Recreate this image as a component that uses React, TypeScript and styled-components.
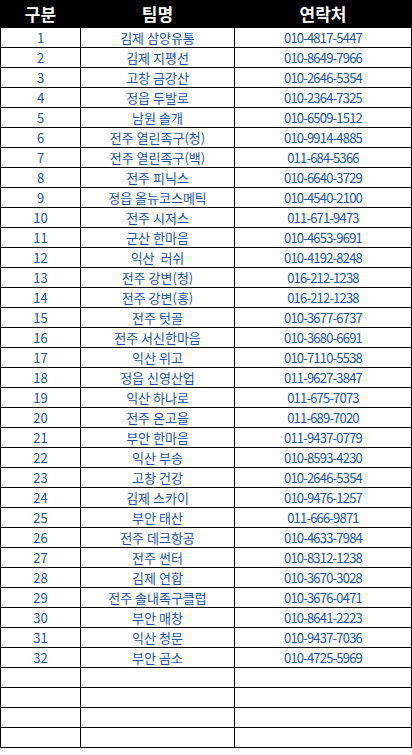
import React, { FC } from 'react';
import styled, { createGlobalStyle } from 'styled-components';

const GlobalStyle = createGlobalStyle`
  html, body {
    margin: 0;
    padding: 0;
    background: #ffffff;
  }
`;

interface Team {
  name: string;
  phone: string;
}

const teams: Team[] = [
  { name: '김제 삼양유통', phone: '010-4817-5447' },
  { name: '김제 지평선', phone: '010-8649-7966' },
  { name: '고창 금강산', phone: '010-2646-5354' },
  { name: '정읍 두발로', phone: '010-2364-7325' },
  { name: '남원 솔개', phone: '010-6509-1512' },
  { name: '전주 열린족구(청)', phone: '010-9914-4885' },
  { name: '전주 열린족구(백)', phone: '011-684-5366' },
  { name: '전주 피닉스', phone: '010-6640-3729' },
  { name: '정읍 올뉴코스메틱', phone: '010-4540-2100' },
  { name: '전주 시저스', phone: '011-671-9473' },
  { name: '군산 한마음', phone: '010-4653-9691' },
  { name: '익산  러쉬', phone: '010-4192-8248' },
  { name: '전주 강변(청)', phone: '016-212-1238' },
  { name: '전주 강변(홍)', phone: '016-212-1238' },
  { name: '전주 텃골', phone: '010-3677-6737' },
  { name: '전주 서신한마음', phone: '010-3680-6691' },
  { name: '익산 위고', phone: '010-7110-5538' },
  { name: '정읍 신영산업', phone: '011-9627-3847' },
  { name: '익산 하나로', phone: '011-675-7073' },
  { name: '전주 온고을', phone: '011-689-7020' },
  { name: '부안 한마음', phone: '011-9437-0779' },
  { name: '익산 부송', phone: '010-8593-4230' },
  { name: '고창 건강', phone: '010-2646-5354' },
  { name: '김제 스카이', phone: '010-9476-1257' },
  { name: '부안 태산', phone: '011-666-9871' },
  { name: '전주 데크항공', phone: '010-4633-7984' },
  { name: '전주 썬터', phone: '010-8312-1238' },
  { name: '김제 연합', phone: '010-3670-3028' },
  { name: '전주 솔내족구클럽', phone: '010-3676-0471' },
  { name: '부안 매창', phone: '010-8641-2223' },
  { name: '익산 청문', phone: '010-9437-7036' },
  { name: '부안 곰소', phone: '010-4725-5969' },
];

const EMPTY_ROWS = 4;

const App: FC = () => (
  <>
    <GlobalStyle />
    <Table>
      <colgroup>
        <col style={{ width: 80 }} />
        <col style={{ width: 154 }} />
        <col style={{ width: 177 }} />
      </colgroup>
      <thead>
        <HeadRow>
          <HeadCell>구분</HeadCell>
          <HeadCell>팀명</HeadCell>
          <HeadCell>연락처</HeadCell>
        </HeadRow>
      </thead>
      <tbody>
        {teams.map((team, i) => (
          <Row key={i}>
            <Cell>{i + 1}</Cell>
            <Cell>{team.name}</Cell>
            <Cell $numeric>{team.phone}</Cell>
          </Row>
        ))}
        {Array.from({ length: EMPTY_ROWS }).map((_, i) => (
          <Row key={'empty' + i}>
            <Cell />
            <Cell />
            <Cell />
          </Row>
        ))}
      </tbody>
    </Table>
  </>
);

export default App;

const Table = styled.table`
  width: 411px;
  table-layout: fixed;
  border-collapse: collapse;
  font-family: 'Noto Sans CJK KR', 'Noto Sans', sans-serif;
`;

const HeadRow = styled.tr`
  height: 26px;
  background: #000000;
`;

const HeadCell = styled.th`
  padding: 0;
  color: #ffffff;
  font-size: 17px;
  font-weight: 700;
  line-height: 26px;
  text-align: center;
  border: 1px solid #000000;
`;

const Row = styled.tr`
  height: 20px;
`;

const Cell = styled.td<{ $numeric?: boolean }>`
  padding: 0;
  height: 19px;
  border: 1px solid #000000;
  color: #1b55a3;
  font-size: 13px;
  line-height: 18px;
  text-align: center;
  white-space: pre;
  letter-spacing: ${(p) => (p.$numeric ? '-0.8px' : '0')};
`;
